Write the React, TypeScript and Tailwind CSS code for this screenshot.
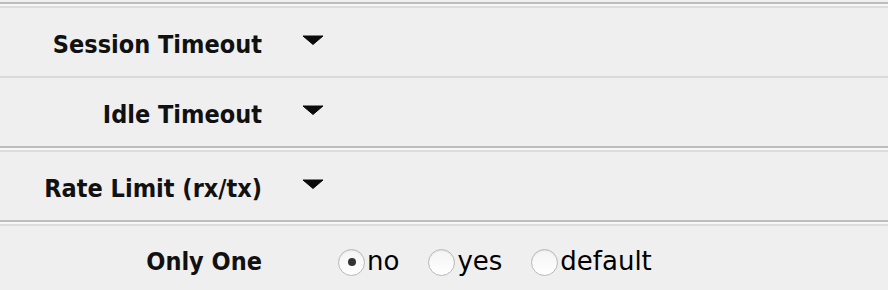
import { useState } from "react";

const labelFont = { fontFamily: '"DejaVu Sans Condensed", "DejaVu Sans", sans-serif' };

function Caret() {
  return (
    <svg width="22" height="10" viewBox="0 0 22 10" className="block">
      <polygon points="1,1 21,1 11,9.5" fill="#0a0a0a" strokeLinejoin="round" stroke="#0a0a0a" strokeWidth="1" />
    </svg>
  );
}

function Radio({ checked }: { checked: boolean }) {
  return (
    <span className="flex h-[27px] w-[27px] items-center justify-center rounded-full border border-[#b9b9b9] bg-gradient-to-b from-[#f4f4f4] to-white shadow-[inset_0_1px_1px_rgba(0,0,0,0.08)]">
      {checked && <span className="h-[8px] w-[8px] rounded-full bg-[#333]" />}
    </span>
  );
}

function HeavySep() {
  return (
    <div>
      <div className="h-[2px] bg-[#bdbdbd]" />
      <div className="h-[2px] bg-[#f7f7f7]" />
      <div className="h-[2px] bg-[#dcdcdc]" />
    </div>
  );
}

function DropRow({ label }: { label: string }) {
  return (
    <div className="flex h-[68px] items-center pt-[5px]">
      <div className="w-[262px] text-right text-[25px] font-bold text-[#111]" style={labelFont}>
        {label}
      </div>
      <div className="ml-[40px] -mt-[9px]">
        <Caret />
      </div>
    </div>
  );
}

export default function App() {
  const [only, setOnly] = useState("no");
  const options = ["no", "yes", "default"];

  return (
    <div className="h-[290px] w-[888px] overflow-hidden bg-[#efefef]">
      <div className="h-[2px]" />
      <HeavySep />
      <DropRow label="Session Timeout" />
      <div className="h-[2px] bg-[#dadada]" />
      <DropRow label="Idle Timeout" />
      <HeavySep />
      <DropRow label="Rate Limit (rx/tx)" />
      <HeavySep />
      <div className="flex h-[64px] items-center pt-[8px]">
        <div className="w-[262px] text-right text-[25px] font-bold text-[#111]" style={labelFont}>
          Only One
        </div>
        <div className="ml-[76px] flex items-center">
          {options.map((o) => (
            <label
              key={o}
              className="mr-[29px] flex cursor-pointer items-center text-[26px] text-black"
              style={{ fontFamily: '"DejaVu Sans", sans-serif' }}
              onClick={() => setOnly(o)}
            >
              <Radio checked={only === o} />
              <span className="ml-[2px] -mt-[2px]">{o}</span>
            </label>
          ))}
        </div>
      </div>
    </div>
  );
}
